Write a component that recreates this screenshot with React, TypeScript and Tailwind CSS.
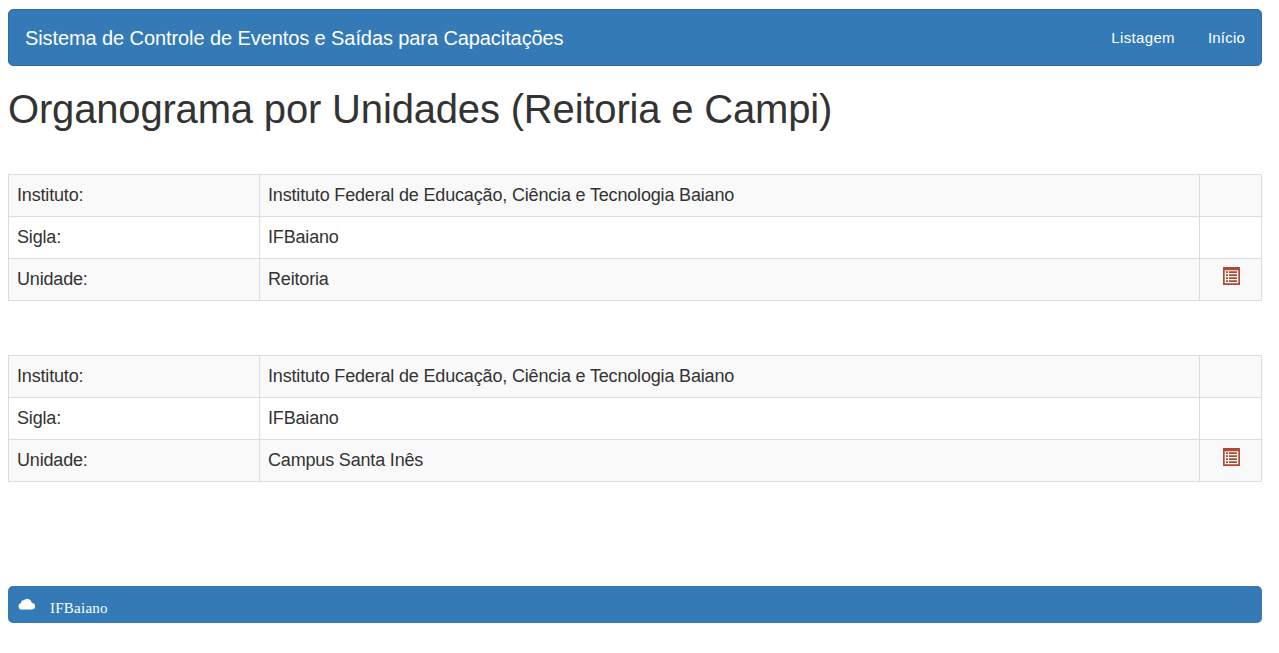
import React from "react";

function ListIcon() {
  return (
    <svg width="17" height="18" viewBox="0 0 17 18" fill="#ad4a32" className="block">
      <path fillRule="evenodd" d="M0 .5a.5.5 0 0 1 .5-.5h16a.5.5 0 0 1 .5.5v17a.5.5 0 0 1-.5.5H.5a.5.5 0 0 1-.5-.5zM1.7 3.2v13.1h13.6V3.2z" />
      <path d="M3 4.3h2v1.6H3zM6 4.3h8v1.6H6zM3 7.3h2v1.6H3zM6 7.3h8v1.6H6zM3 10.3h2v1.6H3zM6 10.3h8v1.6H6zM3 13.3h2v1.6H3zM6 13.3h8v1.6H6z" />
    </svg>
  );
}

function UnitTable({ unit }: { unit: string }) {
  const rows = [
    ["Instituto:", "Instituto Federal de Educação, Ciência e Tecnologia Baiano"],
    ["Sigla:", "IFBaiano"],
    ["Unidade:", unit],
  ];
  return (
    <table className="w-full table-fixed border-collapse text-[18px] leading-[25px] tracking-[-0.17px]">
      <colgroup>
        <col className="w-[251px]" />
        <col />
        <col className="w-[62px]" />
      </colgroup>
      <tbody>
        {rows.map(([label, value], i) => (
          <tr key={label} className="h-[42px] odd:bg-[#f9f9f9]">
            <td className="border border-[#ddd] px-2 py-0 align-middle">{label}</td>
            <td className="border border-[#ddd] px-2 py-0 align-middle">{value}</td>
            <td className="border border-[#ddd] p-0 align-top">
              {i === 2 && (
                <div className="flex justify-center pt-2 pl-0.5">
                  <ListIcon />
                </div>
              )}
            </td>
          </tr>
        ))}
      </tbody>
    </table>
  );
}

export default function App() {
  return (
    <div className="h-[653px] overflow-hidden bg-white pt-[9px] pr-[17px] pl-2 font-['Liberation_Sans',Arial,sans-serif] text-[#333]">
      <nav className="flex h-[57px] items-center justify-between rounded-[5px] border border-[#2e6da4] bg-[#337ab7] px-4 text-white">
        <span className="text-[20px] tracking-[-0.09px]">Sistema de Controle de Eventos e Saídas para Capacitações</span>
        <div className="flex gap-[33px] pt-px text-[15px] tracking-[0.35px]">
          <span>Listagem</span>
          <span className="tracking-[0.2px]">Início</span>
        </div>
      </nav>
      <h1 className="mt-[20px] mb-[42px] text-[40px] leading-[46px] tracking-[-0.17px]">Organograma por Unidades (Reitoria e Campi)</h1>
      <UnitTable unit="Reitoria" />
      <div className="h-[54px]" />
      <UnitTable unit="Campus Santa Inês" />
      <footer className="mt-[104px] flex h-[37px] items-center rounded-[5px] bg-[#337ab7] pl-[10px] text-white">
        <svg width="17" height="12" viewBox="0 0 17 12" fill="currentColor" className="mb-px">
          <path d="M4 11.5a3.3 3.3 0 0 1-.9-6.5A2.6 2.6 0 0 1 5.8 2.2 4.6 4.6 0 0 1 13.8 4.8a3.3 3.3 0 0 1-.2 6.7z" />
        </svg>
        <span className="ml-[15px] pt-[7px] font-['Liberation_Serif',serif] text-[15px] tracking-[0.25px]">IFBaiano</span>
      </footer>
    </div>
  );
}
